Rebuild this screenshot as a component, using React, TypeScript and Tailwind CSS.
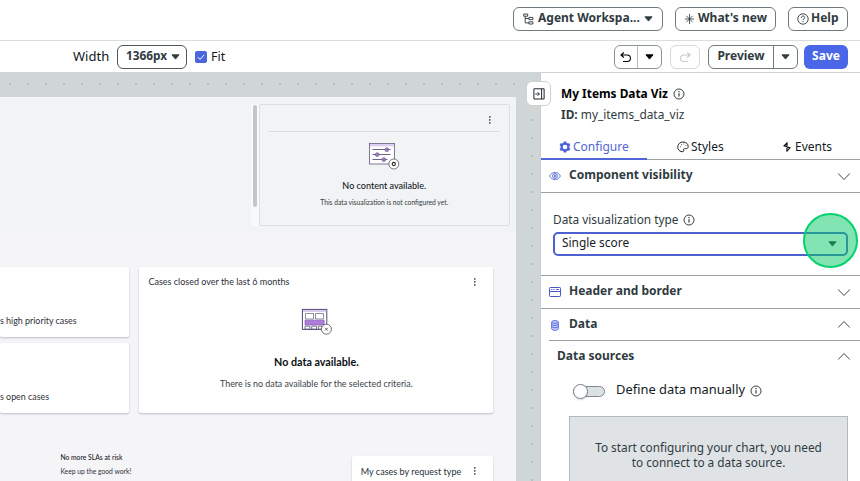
import React from "react";

const Caret = ({ className = "" }: { className?: string }) => (
  <svg width="9" height="6" viewBox="0 0 9 6" className={`shrink-0 ${className}`}>
    <path d="M0.9 0.8h7.2L4.5 5.1z" fill="currentColor" stroke="currentColor" strokeWidth="0.9" strokeLinejoin="round" />
  </svg>
);

const Info = () => (
  <svg width="12" height="12" viewBox="0 0 12 12" fill="none" stroke="#222b30" className="shrink-0">
    <circle cx="6" cy="6" r="5" strokeWidth="0.9" />
    <path d="M6 5.2v3.4M6 3v1.2" strokeWidth="1.1" />
  </svg>
);

const Chevron = ({ up = false }: { up?: boolean }) => (
  <svg width="14" height="9" viewBox="0 0 14 9" fill="none" stroke="#3c464b" strokeWidth="1" className="shrink-0">
    <path d={up ? "M1.2 7.5L7 1.5l5.8 6" : "M1.2 1.5L7 7.5l5.8-6"} />
  </svg>
);

const Kebab = () => (
  <svg width="4" height="10" viewBox="0 0 4 10" fill="#3a4247" className="shrink-0">
    <rect x="1" y="1.2" width="1.5" height="1.5" />
    <rect x="1" y="4.2" width="1.5" height="1.5" />
    <rect x="1" y="7.2" width="1.5" height="1.5" />
  </svg>
);

const TreeIcon = () => (
  <svg width="11" height="12" viewBox="0 0 11 12" fill="none" stroke="#2b363c" className="shrink-0">
    <path d="M0.7 1h4v2.2h-4zM5.9 4.4h4v2.2h-4zM5.9 8.8h4V11h-4zM2.2 3.2v6.7h3.7M2.2 5.5h3.7" strokeWidth="0.9" />
  </svg>
);

const StarIcon = () => (
  <svg width="11" height="12" viewBox="0 0 11 12" fill="none" stroke="#2b363c" className="shrink-0">
    <path d="M5.5 1v10M0.8 6h9.4M2.3 2.8l6.4 6.4M8.7 2.8L2.3 9.2" strokeWidth="0.8" />
  </svg>
);

const HelpIcon = () => (
  <svg width="12" height="12" viewBox="0 0 12 12" fill="none" stroke="#2b363c" className="shrink-0">
    <circle cx="6" cy="6" r="5.2" strokeWidth="0.9" />
    <path d="M4.3 4.8C4.3 2.4 7.8 2.6 7.7 4.6 7.6 5.8 6 5.6 6 7.2M6 8v1.1" strokeWidth="0.9" />
  </svg>
);

const CollapseIcon = () => (
  <svg width="12" height="12" viewBox="0 0 12 12" fill="none" stroke="#20282d">
    <path d="M0.9 0.8h10.2v10.2H0.9zM8.6 0.8v10.2" />
    <path d="M2.2 6h4.2M4.6 4.2L6.4 6 4.6 7.8" strokeWidth="0.9" />
  </svg>
);

const GearIcon = () => (
  <svg width="12" height="12" viewBox="0 0 12 12" fill="none" stroke="#4c62dc">
    <circle cx="6" cy="6" r="3.4" strokeWidth="2.2" />
    <path d="M6 0.5v1.8M6 9.7v1.8M1.2 3.2l1.6.9M9.2 7.9l1.6.9M1.2 8.8l1.6-.9M9.2 4.1l1.6-.9" strokeWidth="2.6" />
  </svg>
);

const PaletteIcon = () => (
  <svg width="12" height="12" viewBox="0 0 12 12" fill="none" stroke="#111">
    <path d="M5 10.7C1.9 10.3.6 8.2.8 5.6 1 2.8 3.3 1 6.1 1c3 0 5.1 2 5.1 4.4 0 1.8-1.2 2.4-3 2.2-1.5-.1-1.9.7-1.5 1.6.4.9-.4 1.7-1.7 1.5z" strokeWidth="0.9" />
    <path d="M3 5.7h.8M4.1 3.6h.8M6.6 3h.8M8.6 4.6h.8" strokeWidth="0.8" />
  </svg>
);

const BoltIcon = () => (
  <svg width="8" height="12" viewBox="0 0 8 12" fill="none" stroke="#111">
    <path d="M4.1 1.2v3.4M4 1.8L1 4.8l6 2-3 3.4M3.9 7v3.8" strokeWidth="1.1" />
    <path d="M1.6 5.1l2.6-.4M3.8 6.8l2.8-.3" strokeWidth="0.9" />
  </svg>
);

const EyeIcon = () => (
  <svg width="12" height="10" viewBox="0 0 12 10" fill="none" stroke="#5267d6">
    <path d="M0.6 5C3 .3 9 .3 11.4 5 9 9.7 3 9.7 0.6 5z" strokeWidth="0.9" />
    <circle cx="6" cy="5" r="2.4" strokeWidth="0.9" />
    <rect x="5.2" y="4.2" width="1.6" height="1.6" strokeWidth="0.7" />
  </svg>
);

const WindowIcon = () => (
  <svg width="12" height="11" viewBox="0 0 12 11" fill="none" stroke="#4658ca">
    <rect x="0.5" y="0.5" width="11" height="9" rx="0.8" />
    <path d="M0.5 4.5h11" />
    <path d="M2 2.5h1.3M4.2 2.5h1.3M7 2.5h3" strokeWidth="0.9" />
  </svg>
);

const DatabaseIcon = () => (
  <svg width="8" height="11" viewBox="0 0 8 11" fill="#c3cbfa" stroke="#4a5ee0" className="mt-[2px]">
    <path d="M0.6 2.2v6.6C1.4 10.9 6.6 10.9 7.4 8.8V2.2" strokeWidth="0.8" />
    <ellipse cx="4" cy="2" rx="3.4" ry="1.4" strokeWidth="0.8" />
    <path d="M0.6 4.4c1 1.5 5.8 1.5 6.8 0M0.6 6.6c1 1.5 5.8 1.5 6.8 0" fill="none" strokeWidth="0.8" />
  </svg>
);

const SlidersArt = () => (
  <svg width="32" height="28" viewBox="0 0 32 28" fill="none">
    <rect x="1.5" y="1.5" width="25" height="20.5" fill="#fdfcff" stroke="#635b7d" strokeWidth="0.8" />
    <path d="M2 2h24v2.4H2z" fill="#dccdf2" />
    <path d="M4.5 7.5h18M4.5 12.5h18M4.5 17.5h15" stroke="#5c5474" strokeWidth="0.9" />
    <g fill="#a27acb" stroke="#655183" strokeWidth="0.6">
      <circle cx="18.8" cy="7.7" r="1.9" />
      <circle cx="9.2" cy="12.6" r="1.9" />
      <circle cx="15.8" cy="17.6" r="1.9" />
    </g>
    <circle cx="25.8" cy="22" r="5" fill="#fff" stroke="#56585f" strokeWidth="0.8" />
    <circle cx="25.8" cy="22" r="1.6" stroke="#272731" strokeWidth="1.1" />
  </svg>
);

const TableArt = () => (
  <svg width="32" height="28" viewBox="0 0 32 28" fill="none">
    <rect x="1.4" y="1.4" width="24.4" height="20" fill="#fff" stroke="#504a76" strokeWidth="1" />
    <path d="M2 2h23.2v2H2z" fill="#d8cceb" />
    <path d="M4.5 5.5h8v5.5h-8zM14.5 5.5h8v5.5h-8z" stroke="#76708b" strokeWidth="0.8" />
    <path d="M4 12.2h19.2v4.8H4z" fill="#b17ddc" stroke="#7750a3" strokeWidth="0.6" />
    <path d="M4 18.2h4.8v3H4zM10.7 18.2h4.8v3h-4.8zM17.4 18.2H21v3h-3.6z" stroke="#5a5475" strokeWidth="0.8" />
    <circle cx="25.4" cy="21.2" r="5" fill="#fff" stroke="#4e4f58" strokeWidth="0.8" />
    <path d="M24 19.8l2.8 2.8M26.8 19.8L24 22.6" stroke="#3e3f48" strokeWidth="0.8" />
  </svg>
);

function TopBar() {
  const button =
    "flex h-6 items-center rounded-[6px] border border-[#707a7e] bg-white text-[12px] leading-[20px] font-bold text-[#303b41]";
  return (
    <header className="flex h-[41px] shrink-0 items-start justify-end gap-3 border-b border-[#dadddd] pt-[7px] pr-3">
      <button className={`${button} w-[150px] pl-[9px]`}>
        <TreeIcon />
        <span className="ml-[4px] w-[102px] pb-[2px] text-left whitespace-nowrap">Agent Workspa...</span>
        <Caret className="ml-1" />
      </button>
      <button className={`${button} w-[101px] pl-2`}>
        <StarIcon />
        <span className="ml-[3px] pb-[2px] whitespace-nowrap">What's new</span>
      </button>
      <button className={`${button} w-[60px] pl-2`}>
        <HelpIcon />
        <span className="ml-[2px] pb-[2px]">Help</span>
      </button>
    </header>
  );
}

function Toolbar() {
  return (
    <div className="flex h-8 shrink-0 items-start border-b border-[#cfd3d3] pt-1 pr-3 pl-[73px]">
      <div className="flex h-6 items-center text-[13px] text-[#11181c]">
        <span className="w-11">Width</span>
        <button className="flex h-6 w-[70px] items-center rounded-[6px] border border-[#4d575c] pl-2 text-[11.8px] font-bold text-[#303b41]">
          <span className="w-[45px] pb-[2px] text-left">1366px</span>
          <Caret />
        </button>
        <span className="ml-2 flex size-3 items-center justify-center rounded-[2px] bg-[#4b66da]">
          <svg width="10" height="10" viewBox="0 0 10 10" fill="none" stroke="#fff">
            <path d="M1.8 5.2l2.2 2.2 4.2-4.6" />
          </svg>
        </span>
        <span className="ml-1 text-[12.5px]">Fit</span>
      </div>
      <div className="ml-auto flex h-6 text-[12px] font-bold text-[#303b41]">
        <div className="flex w-12 rounded-[6px] border border-[#8b9396] text-black">
          <span className="flex w-[23px] items-center justify-center border-r border-[#b5babc]">
            <svg width="12" height="12" viewBox="0 0 12 12" fill="none" stroke="currentColor" strokeWidth="1.1">
              <path d="M3.8 1.5L1 4 3.8 6.5M1.2 4h6c4.3 0 4.3 6.5 0 6.5H3" />
            </svg>
          </span>
          <span className="flex flex-1 items-center justify-center">
            <Caret />
          </span>
        </div>
        <div className="ml-2 flex w-[30px] items-center justify-center rounded-[6px] border border-[#d5d9da] text-[#c5cacc]">
          <svg width="12" height="12" viewBox="0 0 12 12" fill="none" stroke="currentColor" strokeWidth="1.1">
            <path d="M8.2 1.5L11 4 8.2 6.5M10.8 4h-6c-4.3 0-4.3 6.5 0 6.5H9" />
          </svg>
        </div>
        <div className="ml-2 flex w-[90px] rounded-[6px] border border-[#707a7e]">
          <span className="flex w-[65px] items-start justify-center border-r border-[#707a7e] leading-[20px]">Preview</span>
          <span className="flex flex-1 items-center justify-center">
            <Caret />
          </span>
        </div>
        <button className="ml-[6px] w-11 rounded-[6px] bg-[#4a67e8] pb-[2px] leading-[22px] text-white">Save</button>
      </div>
    </div>
  );
}

function Canvas() {
  const card = "bg-white rounded-[2px] shadow-[0_1px_2px_rgba(40,45,60,0.28)]";
  return (
    <main className="w-[540px] shrink-0 bg-[#d0d6d6] bg-[radial-gradient(circle,#b9c0c1_1px,transparent_1.3px)] bg-[size:18px_18px] bg-[position:1px_2px] pt-6 font-['Lato',sans-serif]">
      <div className="h-[384px] w-[516px] overflow-hidden bg-[#f5f5f8] text-[#2b3038]">
        <section className="flex h-[135px] bg-[#f1f3f5] pt-[7px]">
          <div className="ml-[251px] h-[122px] w-2 bg-[#f8f9fa] pt-[1px] pl-[2px]">
            <div className="h-[102px] w-1 rounded-full bg-[#c3c5c6]" />
          </div>
          <div className="flex h-[122px] w-[250.5px] flex-col items-center rounded-[2px] border border-[#dcdfe2]">
            <div className="flex h-[27px] w-[232px] items-center justify-end border-b border-[#dbdee1] pt-1 pr-2">
              <Kebab />
            </div>
            <div className="mt-[10px]">
              <SlidersArt />
            </div>
            <p className="mt-[9px] text-[9.05px] leading-[14px] font-medium text-[#14191e]">No content available.</p>
            <p className="mt-[4px] text-[6.72px] leading-[10px] text-[#343b42]">This data visualization is not configured yet.</p>
          </div>
        </section>
        <section className="mt-[34.5px] flex gap-[10px]">
          <div className="flex w-[129.4px] flex-col gap-[6px] text-[8.9px] leading-[12px]">
            <div className={`${card} h-[70px] pt-[48px]`}>s high priority cases</div>
            <div className={`${card} h-[70px] pt-[48px]`}>s open cases</div>
          </div>
          <div className={`${card} flex h-[146px] w-[354px] flex-col items-center`}>
            <div className="flex h-[31px] w-full items-center justify-between pr-4 pl-[9px] text-[9px]">
              Cases closed over the last 6 months
              <Kebab />
            </div>
            <div className="mt-[10px] ml-[1px]">
              <TableArt />
            </div>
            <p className="mt-[18px] text-[10.75px] leading-[15px] font-bold text-[#0c1015]">No data available.</p>
            <p className="mt-[9px] text-[8.9px] leading-[12px] text-[#3a4149]">There is no data available for the selected criteria.</p>
          </div>
        </section>
        <section className="mt-[37.5px] flex">
          <div className="ml-[60.4px] w-[291.4px]">
            <p className="text-[6.75px] leading-[14px] font-medium text-[#15191e]">No more SLAs at risk</p>
            <p className="text-[6.75px] leading-[15px]">Keep up the good work!</p>
          </div>
          <div className={`${card} mt-[6px] flex h-[60px] w-[141.6px] items-start justify-between pt-[10px] pr-4 pl-[9px] text-[9.05px] leading-[12px]`}>
            My cases by request type
            <Kebab />
          </div>
        </section>
      </div>
    </main>
  );
}

function Inspector() {
  return (
    <aside className="relative flex-1 border-l border-[#c8cccd] bg-white text-[#303b41]">
      <button className="absolute top-2 -left-[15px] flex size-[25px] items-center justify-center rounded-[6px] border border-[#cdd1d2] bg-white">
        <CollapseIcon />
      </button>
      <div className="h-[63px] pt-[12px] pl-5">
        <div className="flex h-[18px] items-center gap-[5px] text-[11.9px] font-bold text-black">
          My Items Data Viz <Info />
        </div>
        <p className="mt-[2px] text-[11.9px] leading-[18px]">
          <b>ID:</b> my_items_data_viz
        </p>
      </div>
      <nav className="flex h-6 border-b border-[#9da3a5] text-[12px] leading-[22px] text-[#151b1f]">
        <div className="flex h-6 w-[106px] items-start gap-[2px] border-b-2 border-[#5267d6] pl-[18px] text-[#5267d6]">
          <span className="mt-[5px]"><GearIcon /></span>
          Configure
        </div>
        <div className="flex w-[106px] gap-[2px] pl-[30px]">
          <span className="mt-[5px]"><PaletteIcon /></span>
          Styles
        </div>
        <div className="flex w-[106px] gap-1 pl-[30px]">
          <span className="mt-[5px]"><BoltIcon /></span>
          Events
        </div>
      </nav>
      <Section icon={<EyeIcon />} label="Component visibility" className="h-[33px] pl-[7px]" />
      <div className="h-[83px] border-b border-[#9da3a5] pt-[18px] pl-3">
        <label className="flex h-[18px] items-center gap-1 text-[11.85px]">
          Data visualization type <Info />
        </label>
        <div className="relative mt-[3px] flex h-[24px] w-[295px] items-center justify-between rounded-[5px] border-2 border-[#4d62cf] pr-[9px] pb-[2px] pl-[7px] text-[11.9px] text-[#151b1f]">
          Single score
          <Caret className="mt-[2px] text-[#20352f]" />
          <span className="absolute -top-[21px] -right-[12px] size-[55px] rounded-full border-2 border-[#06d26c] bg-[#05c965]/50" />
        </div>
      </div>
      <Section icon={<WindowIcon />} label="Header and border" className="h-[33px] pl-[7px]" />
      <Section icon={<DatabaseIcon />} label="Data" className="ml-2 h-[32px] [&>span:first-child]:-ml-px" up />
      <div className="flex h-[31px] items-center justify-between pr-[9px] pl-4 text-[12px] font-bold">
        <span className="pb-[2px]">Data sources</span> <Chevron up />
      </div>
      <div className="flex h-[38px] items-center pl-8 text-[12.9px] text-[#151b1f]">
        <span className="relative h-[11px] w-8 rounded-full border border-[#7e898d] bg-[#dce1e4]">
          <span className="absolute -top-[3px] -left-[1px] size-[15px] rounded-full border border-[#7b8488] bg-white shadow-[0_1px_2px_rgba(0,0,0,0.15)]" />
        </span>
        <span className="mr-[5px] ml-[11px] pb-[2px]">Define data manually</span>
        <Info />
      </div>
      <p className="mt-[6px] ml-7 h-[100px] w-[279px] border border-[#b2babd] bg-[#dfe3e6] px-5 pt-[23px] text-center text-[11.8px] leading-[15px]">
        To start configuring your chart, you need to connect to a data source.
      </p>
    </aside>
  );
}

function Section({
  icon,
  label,
  className,
  up = false,
}: {
  icon: React.ReactNode;
  label: string;
  className: string;
  up?: boolean;
}) {
  return (
    <div className={`flex items-center border-b border-[#9da3a5] pr-[9px] text-[12px] font-bold ${className}`}>
      <span className="flex w-[13px] justify-center">{icon}</span>
      <span className="ml-[8px] flex-1 pb-[2px]">{label}</span>
      <Chevron up={up} />
    </div>
  );
}

export default function App() {
  return (
    <div className="flex h-[481px] w-[860px] flex-col overflow-hidden bg-white font-['Noto_Sans',sans-serif]">
      <TopBar />
      <Toolbar />
      <div className="flex min-h-0 flex-1">
        <Canvas />
        <Inspector />
      </div>
    </div>
  );
}
